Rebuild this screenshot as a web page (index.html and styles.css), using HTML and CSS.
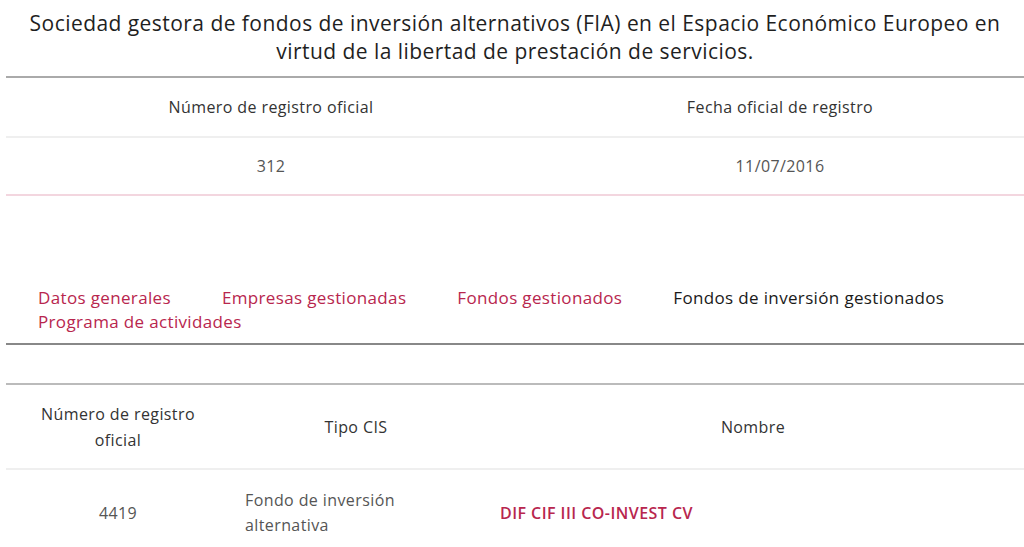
FILE: index.html
```html
<!DOCTYPE html>
<html lang="es">
<head>
<meta charset="utf-8">
<title>Sociedad gestora</title>
<link rel="stylesheet" href="styles.css">
</head>
<body>
<main class="page">
  <h1 class="title">Sociedad gestora de fondos de inversión alternativos (FIA) en el Espacio Económico Europeo en<br>virtud de la libertad de prestación de servicios.</h1>

  <section class="reg">
    <div class="reg-row reg-head">
      <div class="cell">Número de registro oficial</div>
      <div class="cell">Fecha oficial de registro</div>
    </div>
    <div class="reg-row reg-data">
      <div class="cell">312</div>
      <div class="cell">11/07/2016</div>
    </div>
  </section>

  <nav class="tabs">
    <a class="tab" href="#">Datos generales</a>
    <a class="tab" href="#">Empresas gestionadas</a>
    <a class="tab" href="#">Fondos gestionados</a>
    <a class="tab active" href="#">Fondos de inversión gestionados</a>
    <a class="tab" href="#">Programa de actividades</a>
  </nav>
  <div class="panel-gap"></div>

  <section class="funds">
    <div class="funds-row funds-head">
      <div class="fcell c1">Número de registro oficial</div>
      <div class="fcell c2">Tipo CIS</div>
      <div class="fcell c3">Nombre</div>
    </div>
    <div class="funds-row funds-data">
      <div class="fcell c1">4419</div>
      <div class="fcell c2 left">Fondo de inversión alternativa</div>
      <div class="fcell c3 left"><a class="fund-link" href="#">DIF CIF III CO-INVEST CV</a></div>
    </div>
  </section>
</main>
</body>
</html>
```

FILE: styles.css
```css
* { box-sizing: border-box; }
html, body { margin: 0; padding: 0; background: #fff; }
body {
  font-family: "Open Sans", "Noto Sans", sans-serif;
  color: #333;
  letter-spacing: 0.4px;
  overflow: hidden;
}
.page {
  padding-left: 6px;
}
.title {
  margin: 0;
  padding: 9px 0 11px;
  font-size: 21px;
  line-height: 28px;
  font-weight: 500;
  letter-spacing: 0.45px;
  color: #1f1f1f;
  text-align: center;
  border-bottom: 2px solid #aaa;
}
.reg-row {
  display: grid;
  grid-template-columns: 530px 1fr;
  align-items: center;
  text-align: center;
}
.reg-head {
  height: 60px;
  border-bottom: 2px solid #efefef;
  font-size: 16px;
  color: #333;
  font-weight: 500;
}
.reg-data {
  height: 58px;
  border-bottom: 2px solid #f3d6df;
  font-size: 16px;
  color: #555;
}
.tabs {
  margin-top: 90px;
  padding: 0 0 9px 32px;
  display: flex;
  flex-wrap: wrap;
  column-gap: 51px;
  font-size: 17px;
  line-height: 24px;
  font-weight: 500;
  letter-spacing: 0.35px;
  border-bottom: 2px solid #888;
}
.tab {
  color: #b8264e;
  text-decoration: none;
}
.tab.active { color: #1a1a1a; }
.panel-gap {
  height: 40px;
  border-bottom: 2px solid #bbb;
}
.funds-row {
  display: grid;
  grid-template-columns: 224px 252px 1fr;
  align-items: center;
}
.funds-head {
  height: 85px;
  border-bottom: 2px solid #efefef;
  font-size: 16px;
  line-height: 26px;
  font-weight: 500;
  color: #333;
}
.funds-data {
  height: 86px;
  font-size: 16px;
  line-height: 25px;
  color: #555;
}
.fcell { text-align: center; padding: 0 15px; }
.fcell.c1 { padding: 0 20px; }
.fcell.left { text-align: left; }
.fcell.c3.left { padding-left: 18px; }
.fund-link {
  color: #b8264e;
  font-weight: 600;
  letter-spacing: 0.45px;
  text-decoration: none;
}
```
